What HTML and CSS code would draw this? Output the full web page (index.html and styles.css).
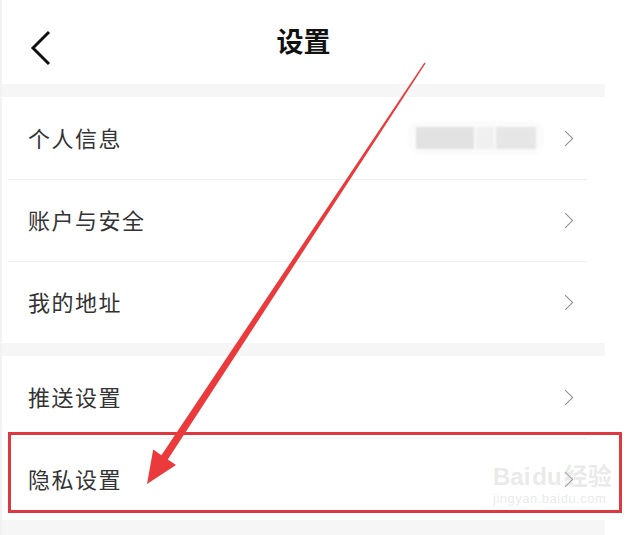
FILE: index.html
```html
<!DOCTYPE html>
<html>
<head>
    <title>设置</title>
    <link rel="stylesheet" href="styles.css">
</head>
<body>
    <div class="screen">
        <div class="header">
            <svg class="back" width="26" height="38" viewBox="0 0 26 38">
                <path d="M21 3 L5 19 L21 35" fill="none" stroke="#111" stroke-width="3"/>
            </svg>
            <h1>设置</h1>
        </div>
        <div class="band"></div>
        <div class="group">
            <div class="row">
                <span class="label">个人信息</span>
                <div class="blur">
                    <span class="blk a"></span><span class="blk b"></span><span class="blk c"></span>
                </div>
                <span class="chev"></span>
            </div>
            <div class="row">
                <span class="label">账户与安全</span>
                <span class="chev"></span>
            </div>
            <div class="row">
                <span class="label">我的地址</span>
                <span class="chev"></span>
            </div>
        </div>
        <div class="band"></div>
        <div class="group">
            <div class="row">
                <span class="label">推送设置</span>
                <span class="chev"></span>
            </div>
            <div class="row">
                <span class="label">隐私设置</span>
                <span class="chev"></span>
            </div>
        </div>
        <div class="band tail"></div>
    </div>

    <div class="highlight"></div>

    <svg class="arrow" width="641" height="535" viewBox="0 0 641 535">
        <polygon fill="#ea3a3c" points="424.5,62.6 425.5,63.4 167.8,459.5 176,465 147,484 153.2,449.6 161.4,455.2"/>
    </svg>

    <div class="mark">
        <div class="mark-logo">Bai<span class="paw">du</span>经验</div>
        <div class="mark-url">jingyan.baidu.com</div>
    </div>
</body>
</html>
```
FILE: styles.css
```css
body {
    margin: 0;
    background-color: white;
    font-family: "Noto Sans CJK SC", "Noto Sans", sans-serif;
    color: #333;
    width: 641px;
    height: 535px;
    overflow: hidden;
}
.screen {
    width: 603px;
    border-left: 2px solid #f2f2f2;
}
.header {
    height: 84px;
    display: flex;
    align-items: center;
    justify-content: center;
    position: relative;
}
.header .back {
    position: absolute;
    left: 26px;
    top: 29px;
}
.header h1 {
    margin: 0;
    font-size: 27px;
    font-weight: bold;
    color: #111;
    margin-top: -4px;
}
.band {
    height: 13px;
    background-color: #f6f6f6;
}
.band.tail {
    height: 20px;
}
.row {
    height: 82px;
    display: flex;
    align-items: center;
    padding: 0 30px 0 26px;
    position: relative;
}
.row + .row::before {
    content: "";
    position: absolute;
    top: 0;
    left: 6px;
    right: 18px;
    height: 1px;
    background-color: #f0f0f0;
}
.row .label {
    flex: 1;
    font-size: 22px;
    color: #333;
    letter-spacing: 1.5px;
    margin-top: -3px;
}
.blur {
    display: flex;
    align-items: center;
    gap: 2px;
    margin-right: 16px;
    padding: 6px 8px;
    border-radius: 14px;
    background-color: #fbfbfb;
    filter: blur(1px);
}
.blk {
    height: 22px;
    background-color: #e2e2e2;
}
.blk.a { width: 58px; }
.blk.b { width: 18px; background-color: #f0f0f0; }
.blk.c { width: 40px; background-color: #e6e6e6; }
.chev {
    width: 10px;
    height: 10px;
    border-top: 1.5px solid #8c8c8c;
    border-right: 1.5px solid #8c8c8c;
    transform: rotate(45deg);
    margin-right: 4px;
}
.highlight {
    position: absolute;
    left: 8px;
    top: 432px;
    width: 608px;
    height: 75px;
    border: 3px solid #dc3a40;
}
.arrow {
    position: absolute;
    left: 0;
    top: 0;
}
.mark {
    position: absolute;
    left: 493px;
    top: 462px;
    color: rgba(200, 200, 200, 0.4);
    font-family: "Liberation Sans", "Noto Sans CJK SC", sans-serif;
}
.mark-logo {
    font-size: 24px;
    font-weight: bold;
    line-height: 30px;
}
.mark-logo .paw {
    margin: 0 2px;
}
.mark-url {
    font-size: 13px;
    line-height: 14px;
    letter-spacing: 0.5px;
}
```
